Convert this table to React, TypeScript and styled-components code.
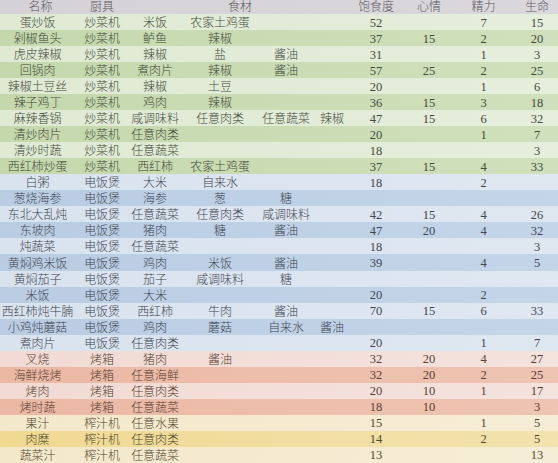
import React from "react";
import styled, { createGlobalStyle } from "styled-components";

const GlobalStyle = createGlobalStyle`
  html, body { margin: 0; padding: 0; background: #ffffff; }
  body { width: 558px; height: 463px; overflow: hidden; }
`;

type Tone = "green" | "blue" | "pink" | "yellow";

const palette: Record<Tone, { light: [string, string]; dark: [string, string]; text: string }> = {
  green: { light: ["#dfe9d3", "#e6eedc"], dark: ["#c5d8ac", "#d0e0bc"], text: "#434b3c" },
  blue: { light: ["#d9e3ee", "#dfe7f1"], dark: ["#b9cce2", "#c4d5e8"], text: "#3f4652" },
  pink: { light: ["#f1dbd4", "#f4e2dc"], dark: ["#ebb8a3", "#efc4b3"], text: "#5a3d33" },
  yellow: { light: ["#f4e8cb", "#f6edd6"], dark: ["#f0d991", "#f3e2ae"], text: "#504a31" },
};

const COLS = "75px 54px 52px 78px 54px 38px 50px 56px 53px 48px";

const Sheet = styled.div`
  width: 558px;
  height: 463px;
  display: flex;
  flex-direction: column;
  font-family: "Liberation Serif", "Noto Sans CJK SC", serif;
  font-size: 12px;
  font-weight: 300;
`;

const HeaderRow = styled.div`
  display: grid;
  grid-template-columns: ${COLS};
  height: 14px;
  background: linear-gradient(90deg, #d4d2d7, #dad8dd);
  color: #5a595f;
`;

const Row = styled.div<{ $tone: Tone; $dark: boolean }>`
  display: grid;
  grid-template-columns: ${COLS};
  flex: 1;
  background: ${({ $tone, $dark }) => {
    const [a, b] = $dark ? palette[$tone].dark : palette[$tone].light;
    return `linear-gradient(90deg, ${a}, ${b})`;
  }};
  color: ${({ $tone }) => palette[$tone].text};
`;

const Cell = styled.div<{ $span?: number; $shift?: number }>`
  grid-column: ${({ $span }) => ($span ? `span ${$span}` : "auto")};
  display: flex;
  align-items: flex-end;
  justify-content: center;
  white-space: nowrap;
  padding-left: ${({ $shift }) => ($shift ? `${$shift}px` : "0")};
  padding-bottom: 1px;
  line-height: 1;
  letter-spacing: -0.1px;
`;

const HeadCell = styled(Cell)`
  align-items: center;
  padding-bottom: 0;
`;

const Num = styled(Cell)`
  font-size: 12.5px;
`;

type Dish = {
  name: string;
  tool: string;
  ing: string[];
  stats: (number | "")[];
};

const dishes: Dish[] = [
  { name: "蛋炒饭", tool: "炒菜机", ing: ["米饭", "农家土鸡蛋"], stats: [52, "", 7, 15] },
  { name: "剁椒鱼头", tool: "炒菜机", ing: ["鲈鱼", "辣椒"], stats: [37, 15, 2, 20] },
  { name: "虎皮辣椒", tool: "炒菜机", ing: ["辣椒", "盐", "酱油"], stats: [31, "", 1, 3] },
  { name: "回锅肉", tool: "炒菜机", ing: ["煮肉片", "辣椒", "酱油"], stats: [57, 25, 2, 25] },
  { name: "辣椒土豆丝", tool: "炒菜机", ing: ["辣椒", "土豆"], stats: [20, "", 1, 6] },
  { name: "辣子鸡丁", tool: "炒菜机", ing: ["鸡肉", "辣椒"], stats: [36, 15, 3, 18] },
  { name: "麻辣香锅", tool: "炒菜机", ing: ["咸调味料", "任意肉类", "任意蔬菜", "辣椒"], stats: [47, 15, 6, 32] },
  { name: "清炒肉片", tool: "炒菜机", ing: ["任意肉类"], stats: [20, "", 1, 7] },
  { name: "清炒时蔬", tool: "炒菜机", ing: ["任意蔬菜"], stats: [18, "", "", 3] },
  { name: "西红柿炒蛋", tool: "炒菜机", ing: ["西红柿", "农家土鸡蛋"], stats: [37, 15, 4, 33] },
  { name: "白粥", tool: "电饭煲", ing: ["大米", "自来水"], stats: [18, "", 2, ""] },
  { name: "葱烧海参", tool: "电饭煲", ing: ["海参", "葱", "糖"], stats: ["", "", "", ""] },
  { name: "东北大乱炖", tool: "电饭煲", ing: ["任意蔬菜", "任意肉类", "咸调味料"], stats: [42, 15, 4, 26] },
  { name: "东坡肉", tool: "电饭煲", ing: ["猪肉", "糖", "酱油"], stats: [47, 20, 4, 32] },
  { name: "炖蔬菜", tool: "电饭煲", ing: ["任意蔬菜"], stats: [18, "", "", 3] },
  { name: "黄焖鸡米饭", tool: "电饭煲", ing: ["鸡肉", "米饭", "酱油"], stats: [39, "", 4, 5] },
  { name: "黄焖茄子", tool: "电饭煲", ing: ["茄子", "咸调味料", "糖"], stats: ["", "", "", ""] },
  { name: "米饭", tool: "电饭煲", ing: ["大米"], stats: [20, "", 2, ""] },
  { name: "西红柿炖牛腩", tool: "电饭煲", ing: ["西红柿", "牛肉", "酱油"], stats: [70, 15, 6, 33] },
  { name: "小鸡炖蘑菇", tool: "电饭煲", ing: ["鸡肉", "蘑菇", "自来水", "酱油"], stats: ["", "", "", ""] },
  { name: "煮肉片", tool: "电饭煲", ing: ["任意肉类"], stats: [20, "", 1, 7] },
  { name: "叉烧", tool: "烤箱", ing: ["猪肉", "酱油"], stats: [32, 20, 4, 27] },
  { name: "海鲜烧烤", tool: "烤箱", ing: ["任意海鲜"], stats: [32, 20, 2, 25] },
  { name: "烤肉", tool: "烤箱", ing: ["任意肉类"], stats: [20, 10, 1, 17] },
  { name: "烤时蔬", tool: "烤箱", ing: ["任意蔬菜"], stats: [18, 10, "", 3] },
  { name: "果汁", tool: "榨汁机", ing: ["任意水果"], stats: [15, "", 1, 5] },
  { name: "肉糜", tool: "榨汁机", ing: ["任意肉类"], stats: [14, "", 2, 5] },
  { name: "蔬菜汁", tool: "榨汁机", ing: ["任意蔬菜"], stats: [13, "", "", 13] },
];

const toneOf = (tool: string): Tone =>
  tool === "炒菜机" ? "green" : tool === "电饭煲" ? "blue" : tool === "烤箱" ? "pink" : "yellow";

export default function App() {
  const counters: Record<string, number> = {};
  return (
    <>
      <GlobalStyle />
      <Sheet>
        <HeaderRow>
          <HeadCell $shift={6}>名称</HeadCell>
          <HeadCell>厨具</HeadCell>
          <HeadCell $span={4}>食材</HeadCell>
          <HeadCell>饱食度</HeadCell>
          <HeadCell>心情</HeadCell>
          <HeadCell>精力</HeadCell>
          <HeadCell $shift={6}>生命</HeadCell>
        </HeaderRow>
        {dishes.map((d) => {
          const tone = toneOf(d.tool);
          const idx = counters[tone] ?? 0;
          counters[tone] = idx + 1;
          const ing = [0, 1, 2, 3].map((i) => d.ing[i] ?? "");
          return (
            <Row key={d.name} $tone={tone} $dark={idx % 2 === 1}>
              <Cell>{d.name}</Cell>
              <Cell>{d.tool}</Cell>
              {ing.map((t, i) => (
                <Cell key={i}>{t}</Cell>
              ))}
              {d.stats.map((s, i) => (
                <Num key={i} $shift={i === 3 ? 6 : 0}>
                  {s}
                </Num>
              ))}
            </Row>
          );
        })}
      </Sheet>
    </>
  );
}
